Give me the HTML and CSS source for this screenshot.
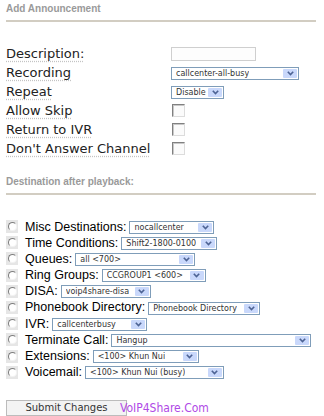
FILE: index.html
```html
<!DOCTYPE html>
<html>
    <head>
        <title>Add Announcement</title>
        <link rel="stylesheet" href="styles.css">
    </head>
    <body>
        <div class="page">
            <h2 class="section">Add Announcement</h2>

            <div class="fields">
                <div class="field">
                    <span class="lbl">Description:</span>
                    <input type="text" class="textbox">
                </div>
                <div class="field">
                    <span class="lbl">Recording</span>
                    <div class="select s_recording"><span class="val">callcenter-all-busy</span><span class="arrow"><svg width="7" height="5" viewBox="0 0 7 5"><path d="M0.8 0.8 L3.5 3.6 L6.2 0.8" fill="none" stroke="#4d6394" stroke-width="1.6"/></svg></span></div>
                </div>
                <div class="field">
                    <span class="lbl">Repeat</span>
                    <div class="select s_repeat"><span class="val">Disable</span><span class="arrow"><svg width="7" height="5" viewBox="0 0 7 5"><path d="M0.8 0.8 L3.5 3.6 L6.2 0.8" fill="none" stroke="#4d6394" stroke-width="1.6"/></svg></span></div>
                </div>
                <div class="field">
                    <span class="lbl">Allow Skip</span>
                    <span class="check"></span>
                </div>
                <div class="field">
                    <span class="lbl">Return to IVR</span>
                    <span class="check"></span>
                </div>
                <div class="field">
                    <span class="lbl">Don't Answer Channel</span>
                    <span class="check"></span>
                </div>
            </div>

            <h2 class="section dest_head">Destination after playback:</h2>

            <div class="dests">
                <div class="dest">
                    <span class="radio"><span class="dot"></span></span>
                    <span class="dlabel">Misc Destinations:</span>
                    <div class="select s_misc"><span class="val">nocallcenter</span><span class="arrow"><svg width="7" height="5" viewBox="0 0 7 5"><path d="M0.8 0.8 L3.5 3.6 L6.2 0.8" fill="none" stroke="#4d6394" stroke-width="1.6"/></svg></span></div>
                </div>
                <div class="dest">
                    <span class="radio"><span class="dot"></span></span>
                    <span class="dlabel">Time Conditions:</span>
                    <div class="select s_time"><span class="val">Shift2-1800-0100</span><span class="arrow"><svg width="7" height="5" viewBox="0 0 7 5"><path d="M0.8 0.8 L3.5 3.6 L6.2 0.8" fill="none" stroke="#4d6394" stroke-width="1.6"/></svg></span></div>
                </div>
                <div class="dest">
                    <span class="radio"><span class="dot"></span></span>
                    <span class="dlabel">Queues:</span>
                    <div class="select s_queues"><span class="val">all &lt;700&gt;</span><span class="arrow"><svg width="7" height="5" viewBox="0 0 7 5"><path d="M0.8 0.8 L3.5 3.6 L6.2 0.8" fill="none" stroke="#4d6394" stroke-width="1.6"/></svg></span></div>
                </div>
                <div class="dest">
                    <span class="radio"><span class="dot"></span></span>
                    <span class="dlabel">Ring Groups:</span>
                    <div class="select s_ring"><span class="val">CCGROUP1 &lt;600&gt;</span><span class="arrow"><svg width="7" height="5" viewBox="0 0 7 5"><path d="M0.8 0.8 L3.5 3.6 L6.2 0.8" fill="none" stroke="#4d6394" stroke-width="1.6"/></svg></span></div>
                </div>
                <div class="dest">
                    <span class="radio"><span class="dot"></span></span>
                    <span class="dlabel">DISA:</span>
                    <div class="select s_disa"><span class="val">voip4share-disa</span><span class="arrow"><svg width="7" height="5" viewBox="0 0 7 5"><path d="M0.8 0.8 L3.5 3.6 L6.2 0.8" fill="none" stroke="#4d6394" stroke-width="1.6"/></svg></span></div>
                </div>
                <div class="dest">
                    <span class="radio"><span class="dot"></span></span>
                    <span class="dlabel">Phonebook Directory:</span>
                    <div class="select s_phonebook"><span class="val">Phonebook Directory</span><span class="arrow"><svg width="7" height="5" viewBox="0 0 7 5"><path d="M0.8 0.8 L3.5 3.6 L6.2 0.8" fill="none" stroke="#4d6394" stroke-width="1.6"/></svg></span></div>
                </div>
                <div class="dest">
                    <span class="radio"><span class="dot"></span></span>
                    <span class="dlabel">IVR:</span>
                    <div class="select s_ivr"><span class="val">callcenterbusy</span><span class="arrow"><svg width="7" height="5" viewBox="0 0 7 5"><path d="M0.8 0.8 L3.5 3.6 L6.2 0.8" fill="none" stroke="#4d6394" stroke-width="1.6"/></svg></span></div>
                </div>
                <div class="dest">
                    <span class="radio"><span class="dot"></span></span>
                    <span class="dlabel">Terminate Call:</span>
                    <div class="select s_terminate"><span class="val">Hangup</span><span class="arrow"><svg width="7" height="5" viewBox="0 0 7 5"><path d="M0.8 0.8 L3.5 3.6 L6.2 0.8" fill="none" stroke="#4d6394" stroke-width="1.6"/></svg></span></div>
                </div>
                <div class="dest">
                    <span class="radio"><span class="dot"></span></span>
                    <span class="dlabel">Extensions:</span>
                    <div class="select s_ext"><span class="val">&lt;100&gt; Khun Nui</span><span class="arrow"><svg width="7" height="5" viewBox="0 0 7 5"><path d="M0.8 0.8 L3.5 3.6 L6.2 0.8" fill="none" stroke="#4d6394" stroke-width="1.6"/></svg></span></div>
                </div>
                <div class="dest">
                    <span class="radio"><span class="dot"></span></span>
                    <span class="dlabel">Voicemail:</span>
                    <div class="select s_vm"><span class="val">&lt;100&gt; Khun Nui (busy)</span><span class="arrow"><svg width="7" height="5" viewBox="0 0 7 5"><path d="M0.8 0.8 L3.5 3.6 L6.2 0.8" fill="none" stroke="#4d6394" stroke-width="1.6"/></svg></span></div>
                </div>
            </div>

            <div class="submit_row">
                <button class="submit">Submit Changes</button>
            </div>

            <div class="watermark">VoIP4Share.Com</div>
        </div>
    </body>
</html>
```

FILE: styles.css
```css
body{
    margin: 0;
    background: #fff;
    color: #222;
    font-family: "DejaVu Sans", Verdana, sans-serif;
}
.page{
    position: relative;
    height: 416px;
    padding: 3px 8px 0 6px;
    box-sizing: border-box;
}
.section{
    margin: 0;
    padding-bottom: 5px;
    border-bottom: 2px solid #d2cdc2;
    font: bold 10px/12px "Liberation Sans", Arial, sans-serif;
    color: #9a9a9a;
}
.fields{
    margin-top: 21.5px;
}
.field{
    display: grid;
    grid-template-columns: 165px auto;
    align-items: center;
    height: 19px;
}
.lbl{
    font-size: 13px;
    line-height: 19px;
    text-decoration: underline dotted #c4c4c4;
    text-underline-offset: 3px;
}
.textbox{
    width: 85px;
    height: 14px;
    margin: 2px 0 0 0;
    padding: 0;
    border: 1px solid #cfcfcf;
    background: #fdfdfd;
    box-sizing: border-box;
}
.check{
    width: 13px;
    height: 13px;
    margin: 1px 0 0 1px;
    border: 1px solid;
    border-color: #808080 #dcdcdc #dcdcdc #808080;
    box-shadow: inset 1px 1px #c8c8c8;
    background: #fbfbfb;
    box-sizing: border-box;
}
.dest_head{
    margin-top: 18px;
}
.dests{
    margin-top: 24px;
}
.dest{
    display: flex;
    align-items: center;
    height: 16.2px;
    font: 12.5px/16.2px "Liberation Sans", Arial, sans-serif;
    color: #000;
}
.radio{
    display: flex;
    align-items: center;
    justify-content: center;
    width: 12px;
    height: 13px;
    margin-right: 7px;
    background: #e6e6e6;
}
.dot{
    width: 7px;
    height: 7px;
    border: 1px solid;
    border-color: #7c7c7c #f2f2f2 #f2f2f2 #7c7c7c;
    border-radius: 50%;
    background: #fff;
}
.dlabel{
    margin-right: 3px;
    white-space: nowrap;
}
.select{
    display: flex;
    align-items: center;
    justify-content: space-between;
    height: 13px;
    margin-top: 1px;
    padding: 0 1px 0 4px;
    border: 1px solid #7f9db9;
    background: #fff;
    box-sizing: border-box;
    font-size: 8px;
    line-height: 11px;
    color: #333;
    white-space: nowrap;
}
.val{
    overflow: hidden;
    font-family: "DejaVu Sans", Verdana, sans-serif;
}
.arrow{
    display: flex;
    align-items: center;
    justify-content: center;
    flex: none;
    width: 14px;
    height: 9px;
    border-radius: 1px;
    background: #c9d8fb;
}
.s_recording{ width: 128px; margin-top: 2px; }
.s_repeat{ width: 53px; margin-top: 2px; }
.s_misc{ width: 85px; }
.s_time{ width: 96px; }
.s_queues{ width: 120px; }
.s_ring{ width: 104px; }
.s_disa{ width: 90px; }
.s_phonebook{ width: 112px; }
.s_ivr{ width: 95px; }
.s_terminate{ width: 200px; }
.s_ext{ width: 106px; }
.s_vm{ width: 139px; }
.submit_row{
    margin-top: 15.5px;
}
.submit{
    width: 121px;
    height: 16px;
    padding: 0;
    border: 1px solid #bcbcbc;
    background: #f3f3f3;
    font: 10px/14px "DejaVu Sans", Verdana, sans-serif;
    color: #333;
}
.watermark{
    position: absolute;
    left: 120px;
    top: 401px;
    font: 12px/14px "DejaVu Sans Condensed", "DejaVu Sans", sans-serif;
    color: #b04ae6;
}
```
